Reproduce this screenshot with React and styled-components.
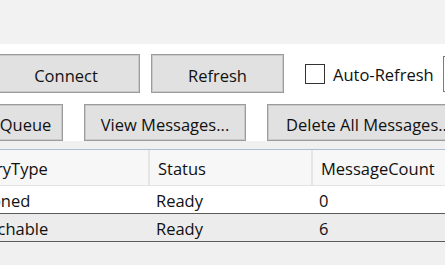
import React from 'react'
import styled, { createGlobalStyle } from 'styled-components';

const GlobalStyle = createGlobalStyle`
  html, body {
    margin: 0;
    padding: 0;
    background: #ffffff;
    overflow: hidden;
  }
  body {
    font-family: "Open Sans", "Noto Sans", sans-serif;
    font-size: 16.5px;
    color: #111;
  }
`;

const Window = styled.div`
  width: 445px;
  height: 265px;
  display: flex;
  flex-direction: column;
  overflow: hidden;
  background: #f0f0f0;
`;

const TopBand = styled.div`
  height: 44px;
  flex-shrink: 0;
  background: #f2f2f2;
`;

const Form = styled.div`
  background: #ffffff;
  padding-top: 10px;
  display: flex;
  flex-direction: column;
`;

const Row = styled.div`
  display: flex;
  align-items: center;
  height: ${p => p.$height}px;
  margin-left: ${p => p.$shift}px;
  margin-top: ${p => p.$top || 0}px;
  gap: ${p => p.$gap}px;
  white-space: nowrap;
`;

const Button = styled.div`
  flex-shrink: 0;
  box-sizing: border-box;
  width: ${p => p.$width}px;
  height: 100%;
  display: flex;
  align-items: center;
  justify-content: ${p => p.$left ? 'flex-start' : 'center'};
  padding-left: ${p => p.$left ? '18px' : '0'};
  padding-top: 3px;
  background: #e1e1e1;
  border: 1px solid #9c9c9c;
  box-shadow: inset 0 0 0 1px #c9c9c9;
`;

const CheckLabel = styled.label`
  display: flex;
  align-items: center;
  gap: 8px;
  margin-left: 10px;
`;

const Box = styled.span`
  width: 20px;
  height: 20px;
  box-sizing: border-box;
  border: 1px solid #333;
  background: #fff;
`;

const LabelText = styled.span`
  padding-top: 2px;
`;

const TextBox = styled.div`
  flex-shrink: 0;
  width: 60px;
  height: 36px;
  box-sizing: border-box;
  border: 1px solid #7a7a7a;
  background: #fff;
  margin-left: -2px;
`;

const Grid = styled.div`
  margin-top: 8px;
  margin-left: -61px;
  width: 570px;
  border-top: 1px solid #aebdd0;
  background: #f0f0f0;
`;

const GridRow = styled.div`
  display: grid;
  grid-template-columns: 211px 163px 1fr;
  height: ${p => p.$header ? 35 : 27}px;
  background: ${p => p.$header ? '#f7f7f7' : p.$alt ? '#ececec' : '#ffffff'};
  border-bottom: 1px solid ${p => p.$header ? '#e3e3e3' : '#5a5a5a'};
`;

const Cell = styled.div`
  display: flex;
  align-items: center;
  padding-left: ${p => p.$header ? (p.$first ? 10 : 8) : 6}px;
  padding-top: 2px;
  border-right: ${p => p.$header ? '2px solid #e6e6e6' : 'none'};
  white-space: nowrap;
  overflow: hidden;
`;

const columns = ['DeliveryType', 'Status', 'MessageCount'];

const rows = [
  { type: 'Partitioned', status: 'Ready', count: 0 },
  { type: 'Unmatchable', status: 'Ready', count: 6 },
];

export default function App() {
  return (
    <>
      <GlobalStyle />
      <Window>
        <TopBand />
        <Form>
          <Row $height={39} $shift={-8} $gap={11}>
            <Button $width={148}>Connect</Button>
            <Button $width={133}>Refresh</Button>
            <CheckLabel>
              <Box />
              <LabelText>Auto-Refresh</LabelText>
            </CheckLabel>
            <TextBox />
          </Row>
          <Row $height={37} $shift={-67} $gap={21} $top={11}>
            <Button $width={130}>Create Queue</Button>
            <Button $width={162}>View Messages...</Button>
            <Button $width={200} $left>Delete All Messages...</Button>
          </Row>
        </Form>
        <Grid>
          <GridRow $header>
            {columns.map((c, i) => <Cell $header $first={i === 0} key={c}>{c}</Cell>)}
          </GridRow>
          {rows.map((r, idx) => (
            <GridRow key={idx} $alt={idx % 2 === 1}>
              <Cell>{r.type}</Cell>
              <Cell>{r.status}</Cell>
              <Cell>{r.count}</Cell>
            </GridRow>
          ))}
        </Grid>
      </Window>
    </>
  )
}
